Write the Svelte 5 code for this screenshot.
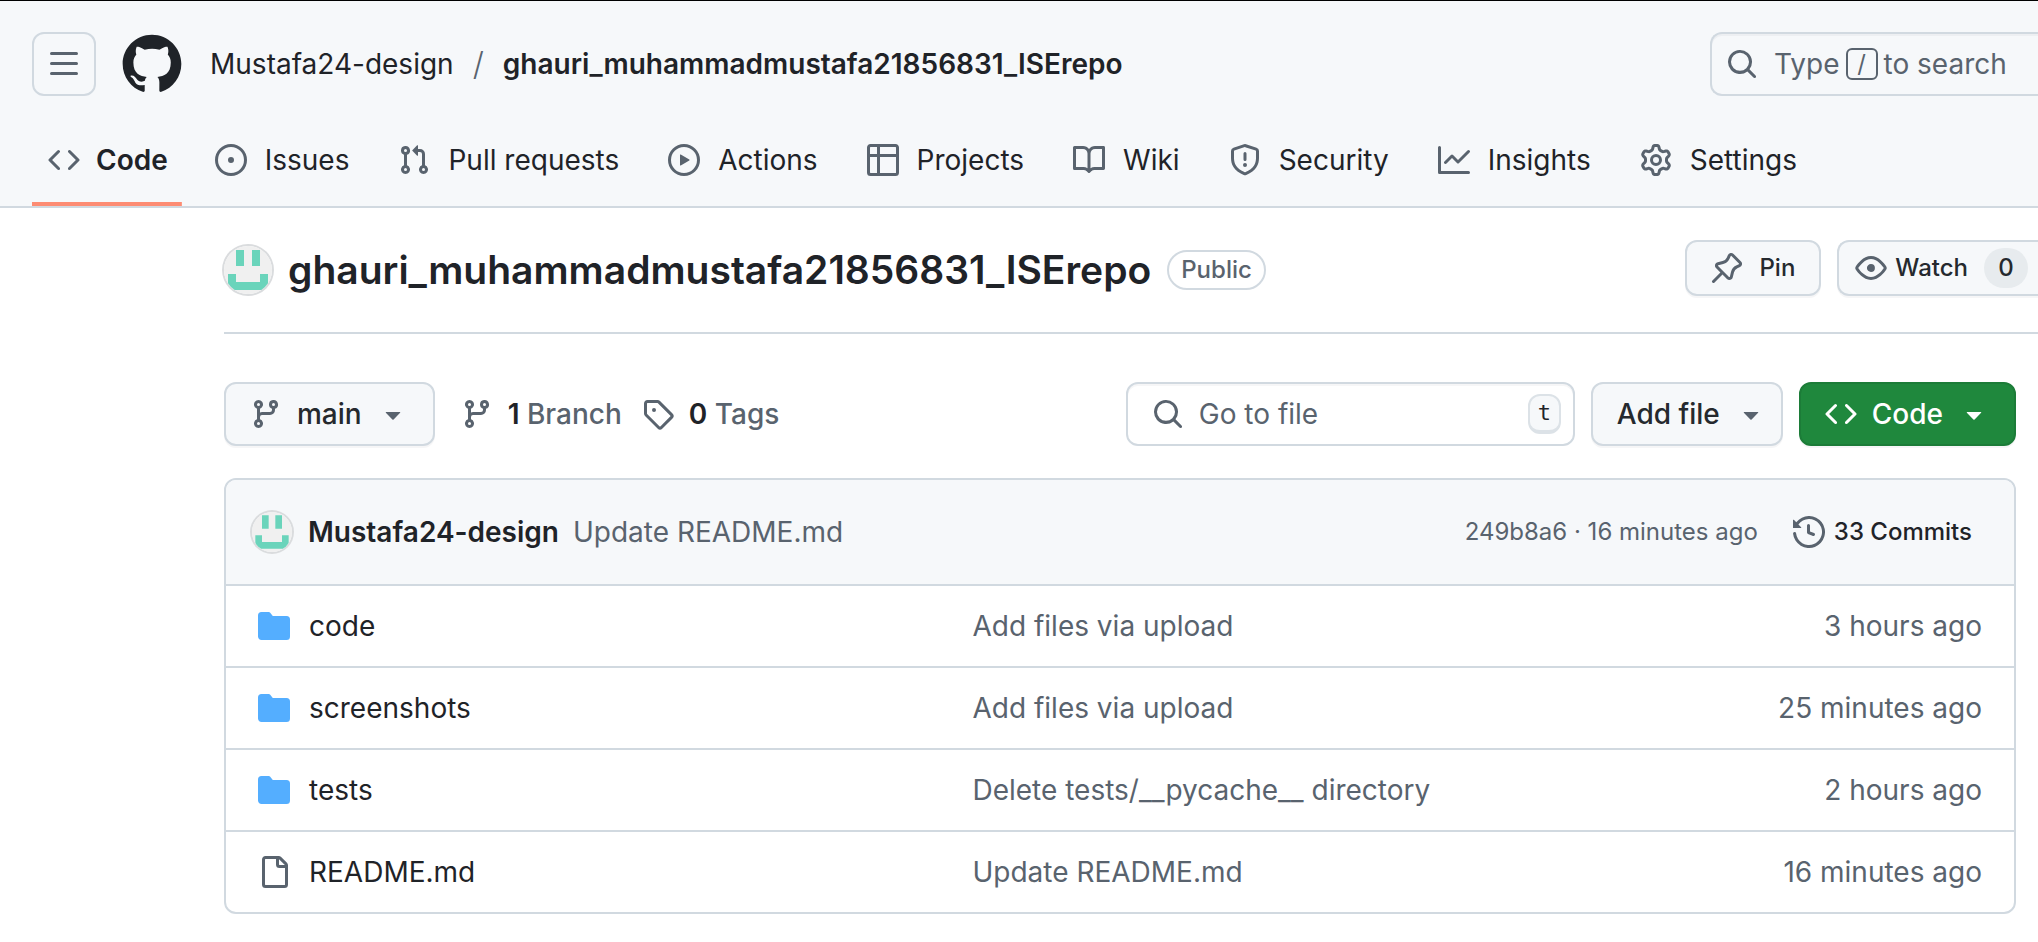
<script>
  const icons = {
    bars: 'M1 2.75A.75.75 0 0 1 1.75 2h12.5a.75.75 0 0 1 0 1.5H1.75A.75.75 0 0 1 1 2.75Zm0 5A.75.75 0 0 1 1.75 7h12.5a.75.75 0 0 1 0 1.5H1.75A.75.75 0 0 1 1 7.75ZM1.75 12h12.5a.75.75 0 0 1 0 1.5H1.75a.75.75 0 0 1 0-1.5Z',
    code: 'm11.28 3.22 4.25 4.25a.75.75 0 0 1 0 1.06l-4.25 4.25a.749.749 0 0 1-1.275-.326.749.749 0 0 1 .215-.734L13.94 8l-3.72-3.72a.749.749 0 0 1 .326-1.275.749.749 0 0 1 .734.215Zm-6.56 0a.751.751 0 0 1 1.042.018.751.751 0 0 1 .018 1.042L2.06 8l3.72 3.72a.749.749 0 0 1-.326 1.275.749.749 0 0 1-.734-.215L.47 8.53a.75.75 0 0 1 0-1.06Z',
    issue: 'M8 9.5a1.5 1.5 0 1 0 0-3 1.5 1.5 0 0 0 0 3ZM8 0a8 8 0 1 1 0 16A8 8 0 0 1 8 0ZM1.5 8a6.5 6.5 0 1 0 13 0 6.5 6.5 0 0 0-13 0Z',
    pull: 'M1.5 3.25a2.25 2.25 0 1 1 3 2.122v5.256a2.251 2.251 0 1 1-1.5 0V5.372A2.25 2.25 0 0 1 1.5 3.25Zm5.677-.177L9.573.677A.25.25 0 0 1 10 .854V2.5h1A2.5 2.5 0 0 1 13.5 5v5.628a2.251 2.251 0 1 1-1.5 0V5a1 1 0 0 0-1-1h-1v1.646a.25.25 0 0 1-.427.177L7.177 3.427a.25.25 0 0 1 0-.354ZM3.75 2.5a.75.75 0 1 0 0 1.5.75.75 0 0 0 0-1.5Zm0 9.5a.75.75 0 1 0 0 1.5.75.75 0 0 0 0-1.5Zm8.25.75a.75.75 0 1 0 1.5 0 .75.75 0 0 0-1.5 0Z',
    play: 'M8 0a8 8 0 1 1 0 16A8 8 0 0 1 8 0ZM1.5 8a6.5 6.5 0 1 0 13 0 6.5 6.5 0 0 0-13 0Zm4.879-2.773 4.264 2.559a.25.25 0 0 1 0 .428l-4.264 2.559A.25.25 0 0 1 6 10.559V5.442a.25.25 0 0 1 .379-.215Z',
    table: 'M0 1.75C0 .784.784 0 1.75 0h12.5C15.216 0 16 .784 16 1.75v12.5A1.75 1.75 0 0 1 14.25 16H1.75A1.75 1.75 0 0 1 0 14.25ZM6.5 6.5v8h7.75a.25.25 0 0 0 .25-.25V6.5Zm8-1.5V1.75a.25.25 0 0 0-.25-.25H6.5V5Zm-13 1.5v7.75c0 .138.112.25.25.25H5v-8ZM5 5V1.5H1.75a.25.25 0 0 0-.25.25V5Z',
    book: 'M0 1.75A.75.75 0 0 1 .75 1h4.253c1.227 0 2.317.59 3 1.501A3.743 3.743 0 0 1 11.006 1h4.245a.75.75 0 0 1 .75.75v10.5a.75.75 0 0 1-.75.75h-4.507a2.25 2.25 0 0 0-1.591.659l-.622.621a.75.75 0 0 1-1.06 0l-.622-.621A2.25 2.25 0 0 0 5.258 13H.75a.75.75 0 0 1-.75-.75Zm7.251 10.324.004-5.073-.002-2.253A2.25 2.25 0 0 0 5.003 2.5H1.5v9h3.757a3.75 3.75 0 0 1 1.994.574ZM8.755 4.75l-.004 7.322a3.752 3.752 0 0 1 1.992-.572H14.5v-9h-3.495a2.25 2.25 0 0 0-2.25 2.25Z',
    shield: 'M7.467.133a1.748 1.748 0 0 1 1.066 0l5.25 1.68A1.75 1.75 0 0 1 15 3.48V7c0 1.566-.32 3.182-1.303 4.682-.983 1.498-2.585 2.813-5.032 3.855a1.697 1.697 0 0 1-1.33 0c-2.447-1.042-4.049-2.357-5.032-3.855C1.32 10.182 1 8.566 1 7V3.48a1.75 1.75 0 0 1 1.217-1.667Zm.61 1.429a.25.25 0 0 0-.153 0l-5.25 1.68a.25.25 0 0 0-.174.238V7c0 1.358.275 2.666 1.057 3.86.784 1.194 2.121 2.34 4.366 3.297a.196.196 0 0 0 .154 0c2.245-.956 3.582-2.104 4.366-3.298C13.225 9.666 13.5 8.36 13.5 7V3.48a.251.251 0 0 0-.174-.237l-5.25-1.68ZM8.75 4.75v3a.75.75 0 0 1-1.5 0v-3a.75.75 0 0 1 1.5 0ZM9 10.5a1 1 0 1 1-2 0 1 1 0 0 1 2 0Z',
    graph: 'M1.5 1.75V13.5h13.75a.75.75 0 0 1 0 1.5H.75a.75.75 0 0 1-.75-.75V1.75a.75.75 0 0 1 1.5 0Zm14.28 2.53-5.25 5.25a.75.75 0 0 1-1.06 0L7 7.06 4.28 9.78a.751.751 0 0 1-1.042-.018.751.751 0 0 1-.018-1.042l3.25-3.25a.75.75 0 0 1 1.06 0L10 7.94l4.72-4.72a.751.751 0 0 1 1.042.018.751.751 0 0 1 .018 1.042Z',
    gear: 'M8 0a8.2 8.2 0 0 1 .701.031C9.444.095 9.99.645 10.16 1.29l.288 1.107c.018.066.079.158.212.224.231.114.454.243.668.386.123.082.233.09.299.071l1.103-.303c.644-.176 1.392.021 1.82.63.27.385.506.792.704 1.218.315.675.111 1.422-.364 1.891l-.814.806c-.049.048-.098.147-.088.294.016.257.016.515 0 .772-.01.147.038.246.088.294l.814.806c.475.469.679 1.216.364 1.891a7.977 7.977 0 0 1-.704 1.217c-.428.61-1.176.807-1.82.63l-1.102-.302c-.067-.019-.177-.011-.3.071a5.909 5.909 0 0 1-.668.386c-.133.066-.194.158-.211.224l-.29 1.106c-.168.646-.715 1.196-1.458 1.26a8.006 8.006 0 0 1-1.402 0c-.743-.064-1.289-.614-1.458-1.26l-.289-1.106c-.018-.066-.079-.158-.212-.224a5.738 5.738 0 0 1-.668-.386c-.123-.082-.233-.09-.299-.071l-1.103.303c-.644.176-1.392-.021-1.82-.63a8.12 8.12 0 0 1-.704-1.218c-.315-.675-.111-1.422.363-1.891l.815-.806c.05-.048.098-.147.088-.294a6.214 6.214 0 0 1 0-.772c.01-.147-.038-.246-.088-.294l-.815-.806C.635 6.045.431 5.298.746 4.623a7.92 7.92 0 0 1 .704-1.217c.428-.61 1.176-.807 1.82-.63l1.102.302c.067.019.177.011.3-.071.214-.143.437-.272.668-.386.133-.066.194-.158.211-.224l.29-1.106C6.009.645 6.556.095 7.299.03 7.53.01 7.764 0 8 0Zm-.571 1.525c-.036.003-.108.036-.137.146l-.289 1.105c-.147.561-.549.967-.998 1.189-.173.086-.34.183-.5.29-.417.278-.97.423-1.529.27l-1.103-.303c-.109-.03-.175.016-.195.045-.22.312-.412.644-.573.99-.014.031-.021.11.059.19l.815.806c.411.406.562.957.53 1.456a4.709 4.709 0 0 0 0 .582c.032.499-.119 1.05-.53 1.456l-.815.806c-.081.08-.073.159-.059.19.162.346.353.677.573.989.02.03.085.076.195.046l1.102-.303c.56-.153 1.113-.008 1.53.27.161.107.328.204.501.29.447.222.85.629.997 1.189l.289 1.105c.029.109.101.143.137.146a6.6 6.6 0 0 0 1.142 0c.036-.003.108-.036.137-.146l.289-1.105c.147-.561.549-.967.998-1.189.173-.086.34-.183.5-.29.417-.278.97-.423 1.529-.27l1.103.303c.109.029.175-.016.195-.045.22-.313.411-.644.573-.99.014-.031.021-.11-.059-.19l-.815-.806c-.411-.406-.562-.957-.53-1.456a4.709 4.709 0 0 0 0-.582c-.032-.499.119-1.05.53-1.456l.815-.806c.081-.08.073-.159.059-.19a6.464 6.464 0 0 0-.573-.989c-.02-.03-.085-.076-.195-.046l-1.102.303c-.56.153-1.113.008-1.53-.27a4.44 4.44 0 0 0-.501-.29c-.447-.222-.85-.629-.997-1.189l-.289-1.105c-.029-.11-.101-.143-.137-.146a6.6 6.6 0 0 0-1.142 0ZM11 8a3 3 0 1 1-6 0 3 3 0 0 1 6 0ZM9.5 8a1.5 1.5 0 1 0-3.001.001A1.5 1.5 0 0 0 9.5 8Z',
    search: 'M10.68 11.74a6 6 0 0 1-7.922-8.982 6 6 0 0 1 8.982 7.922l3.04 3.04a.749.749 0 0 1-.326 1.275.749.749 0 0 1-.734-.215ZM11.5 7a4.499 4.499 0 1 0-8.997 0A4.499 4.499 0 0 0 11.5 7Z',
    pin: 'm11.294.984 3.722 3.722a1.75 1.75 0 0 1-.504 2.826l-1.327.613a3.089 3.089 0 0 0-1.707 2.084l-.584 2.454c-.317 1.332-1.972 1.8-2.94.832L5.75 11.311 1.78 15.28a.749.749 0 1 1-1.06-1.06l3.969-3.97-2.204-2.204c-.968-.968-.5-2.623.832-2.94l2.454-.584a3.08 3.08 0 0 0 2.084-1.707l.613-1.327a1.75 1.75 0 0 1 2.826-.504ZM6.283 9.723l2.732 2.731a.25.25 0 0 0 .42-.119l.584-2.454a4.586 4.586 0 0 1 2.537-3.098l1.328-.613a.25.25 0 0 0 .072-.404l-3.722-3.722a.25.25 0 0 0-.404.072l-.613 1.328a4.584 4.584 0 0 1-3.098 2.537l-2.454.584a.25.25 0 0 0-.119.42l2.731 2.732Z',
    eye: 'M8 2c1.981 0 3.671.992 4.933 2.078 1.27 1.091 2.187 2.345 2.637 3.023a1.62 1.62 0 0 1 0 1.798c-.45.678-1.367 1.932-2.637 3.023C11.67 13.008 9.981 14 8 14c-1.981 0-3.671-.992-4.933-2.078C1.797 10.83.88 9.576.43 8.898a1.62 1.62 0 0 1 0-1.798c.45-.677 1.367-1.931 2.637-3.022C4.33 2.992 6.019 2 8 2ZM1.679 7.932a.12.12 0 0 0 0 .136c.411.622 1.241 1.75 2.366 2.717C5.176 11.758 6.527 12.5 8 12.5c1.473 0 2.825-.742 3.955-1.715 1.124-.967 1.954-2.096 2.366-2.717a.12.12 0 0 0 0-.136c-.412-.621-1.242-1.75-2.366-2.717C10.824 4.242 9.473 3.5 8 3.5c-1.473 0-2.825.742-3.955 1.715-1.124.967-1.954 2.096-2.366 2.717ZM8 10a2 2 0 1 1-.001-3.999A2 2 0 0 1 8 10Z',
    caret: 'm4.427 7.427 3.396 3.396a.25.25 0 0 0 .354 0l3.396-3.396A.25.25 0 0 0 11.396 7H4.604a.25.25 0 0 0-.177.427Z',
    branch: 'M9.5 3.25a2.25 2.25 0 1 1 3 2.122V6A2.5 2.5 0 0 1 10 8.5H6a1 1 0 0 0-1 1v1.128a2.251 2.251 0 1 1-1.5 0V5.372a2.25 2.25 0 1 1 1.5 0v1.836A2.493 2.493 0 0 1 6 7h4a1 1 0 0 0 1-1v-.628A2.25 2.25 0 0 1 9.5 3.25Zm-6 0a.75.75 0 1 0 1.5 0 .75.75 0 0 0-1.5 0Zm8.25-.75a.75.75 0 1 0 0 1.5.75.75 0 0 0 0-1.5ZM4.25 12a.75.75 0 1 0 0 1.5.75.75 0 0 0 0-1.5Z',
    tag: 'M1 7.775V2.75C1 1.784 1.784 1 2.75 1h5.025c.464 0 .91.184 1.238.513l6.25 6.25a1.75 1.75 0 0 1 0 2.474l-5.026 5.026a1.75 1.75 0 0 1-2.474 0l-6.25-6.25A1.752 1.752 0 0 1 1 7.775Zm1.5 0c0 .066.026.13.073.177l6.25 6.25a.25.25 0 0 0 .354 0l5.025-5.025a.25.25 0 0 0 0-.354l-6.25-6.25a.25.25 0 0 0-.177-.073H2.75a.25.25 0 0 0-.25.25ZM6 5a1 1 0 1 1 0 2 1 1 0 0 1 0-2Z',
    history: 'm.427 1.927 1.215 1.215a8.002 8.002 0 1 1-1.6 5.685.75.75 0 1 1 1.493-.154 6.5 6.5 0 1 0 1.18-4.458l1.358 1.358A.25.25 0 0 1 3.896 6H.25A.25.25 0 0 1 0 5.75V2.104a.25.25 0 0 1 .427-.177ZM7.75 4a.75.75 0 0 1 .75.75v2.992l2.028.812a.75.75 0 0 1-.557 1.392l-2.5-1A.751.751 0 0 1 7 8.25v-3.5A.75.75 0 0 1 7.75 4Z',
    folder: 'M1.75 1A1.75 1.75 0 0 0 0 2.75v10.5C0 14.216.784 15 1.75 15h12.5A1.75 1.75 0 0 0 16 13.25v-8.5A1.75 1.75 0 0 0 14.25 3H7.5a.25.25 0 0 1-.2-.1l-.9-1.2C6.07 1.26 5.55 1 5 1H1.75Z',
    file: 'M2 1.75C2 .784 2.784 0 3.75 0h6.586c.464 0 .909.184 1.237.513l2.914 2.914c.329.328.513.773.513 1.237v9.586A1.75 1.75 0 0 1 13.25 16h-9.5A1.75 1.75 0 0 1 2 14.25Zm1.75-.25a.25.25 0 0 0-.25.25v12.5c0 .138.112.25.25.25h9.5a.25.25 0 0 0 .25-.25V6h-2.75A1.75 1.75 0 0 1 9 4.25V1.5Zm6.75.062V4.25c0 .138.112.25.25.25h2.688l-.011-.013-2.914-2.914-.013-.011Z'
  };

  const owner = 'Mustafa24-design';
  const repo = 'ghauri_muhammadmustafa21856831_ISErepo';

  const tabs = [
    { label: 'Code', icon: 'code', current: true },
    { label: 'Issues', icon: 'issue' },
    { label: 'Pull requests', icon: 'pull' },
    { label: 'Actions', icon: 'play' },
    { label: 'Projects', icon: 'table' },
    { label: 'Wiki', icon: 'book' },
    { label: 'Security', icon: 'shield' },
    { label: 'Insights', icon: 'graph' },
    { label: 'Settings', icon: 'gear' }
  ];

  const files = [
    { name: 'code', icon: 'folder', message: 'Add files via upload', age: '3 hours ago' },
    { name: 'screenshots', icon: 'folder', message: 'Add files via upload', age: '25 minutes ago' },
    { name: 'tests', icon: 'folder', message: 'Delete tests/__pycache__ directory', age: '2 hours ago' },
    { name: 'README.md', icon: 'file', message: 'Update README.md', age: '16 minutes ago' }
  ];
</script>

{#snippet icon(name)}
  <svg class="icon {name}" viewBox="0 0 16 16" aria-hidden="true"><path d={icons[name]} /></svg>
{/snippet}

{#snippet avatar(size)}
  <svg class="avatar {size}" viewBox="0 0 48 48" aria-hidden="true">
    <rect width="48" height="48" fill="#f0f0f0" />
    <path fill="#6ad4bb" d="M12 4h8v16h-8zM28 4h8v16h-8zM4 28h8v8h24v-8h8v16H4z" />
  </svg>
{/snippet}

<header class="app-header">
  <div class="global-bar">
    <button class="menu" type="button" aria-label="Menu">{@render icon('bars')}</button>
    <a class="logo" href="#home" aria-label="GitHub">
      <svg viewBox="0 0 24 24" aria-hidden="true">
        <path d="M12 1C5.9225 1 1 5.9225 1 12C1 16.8675 4.14875 20.9787 8.52125 22.4362C9.07125 22.5325 9.2775 22.2025 9.2775 21.9137C9.2775 21.6525 9.26375 20.7862 9.26375 19.865C6.5 20.3737 5.785 19.1912 5.565 18.5725C5.44125 18.2562 4.905 17.28 4.4375 17.0187C4.0525 16.8125 3.5025 16.3037 4.42375 16.29C5.29 16.2762 5.90875 17.0875 6.115 17.4175C7.105 19.0812 8.68625 18.6137 9.31875 18.325C9.415 17.61 9.70375 17.1287 10.02 16.8537C7.5725 16.5787 5.015 15.63 5.015 11.4225C5.015 10.2262 5.44125 9.23625 6.1425 8.46625C6.0325 8.19125 5.6475 7.06375 6.2525 5.55125C6.2525 5.55125 7.17375 5.2625 9.2775 6.67875C10.1575 6.43125 11.0925 6.3075 12.0275 6.3075C12.9625 6.3075 13.8975 6.43125 14.7775 6.67875C16.8813 5.24875 17.8025 5.55125 17.8025 5.55125C18.4075 7.06375 18.0225 8.19125 17.9125 8.46625C18.6138 9.23625 19.04 10.2125 19.04 11.4225C19.04 15.6437 16.4688 16.5787 14.0213 16.8537C14.42 17.1975 14.7638 17.8575 14.7638 18.8887C14.7638 20.36 14.75 21.5425 14.75 21.9137C14.75 22.2025 14.9563 22.5462 15.5063 22.4362C19.8513 20.9787 23 16.8537 23 12C23 5.9225 18.0775 1 12 1Z" />
      </svg>
    </a>
    <nav class="crumbs" aria-label="Breadcrumb">
      <a href="#owner">{owner}</a>
      <span class="slash">/</span>
      <a class="strong" href="#repo">{repo}</a>
    </nav>
    <button class="site-search" type="button">
      {@render icon('search')}
      <span class="hint">Type <kbd>/</kbd> to search</span>
    </button>
  </div>

  <nav class="tabs" aria-label="Repository">
    {#each tabs as tab}
      <a class="tab" class:current={tab.current} href="#{tab.icon}" aria-current={tab.current ? 'page' : undefined}>
        {@render icon(tab.icon)}
        <span>{tab.label}</span>
      </a>
    {/each}
  </nav>
</header>

<main>
  <div class="title-bar">
    {@render avatar('large')}
    <h1>{repo}</h1>
    <span class="visibility">Public</span>
    <div class="actions">
      <button class="btn small pin-button" type="button">{@render icon('pin')}<span>Pin</span></button>
      <button class="btn small watch" type="button">
        {@render icon('eye')}<span>Watch</span><span class="count">0</span>
      </button>
    </div>
  </div>

  <div class="content">
    <div class="toolbar">
      <button class="btn branch-button" type="button">
        {@render icon('branch')}<span>main</span>{@render icon('caret')}
      </button>
      <div class="refs">
        <a href="#branches">{@render icon('branch')}<span><strong>1</strong> Branch</span></a>
        <a href="#tags">{@render icon('tag')}<span><strong>0</strong> Tags</span></a>
      </div>
      <label class="file-search">
        {@render icon('search')}
        <input type="text" placeholder="Go to file" aria-label="Go to file" />
        <kbd>t</kbd>
      </label>
      <button class="btn add" type="button"><span>Add file</span>{@render icon('caret')}</button>
      <button class="btn primary" type="button">
        {@render icon('code')}<span>Code</span>{@render icon('caret')}
      </button>
    </div>

    <section class="files">
      <div class="commit">
        {@render avatar('medium')}
        <a class="author" href="#author">{owner}</a>
        <a class="message" href="#commit">Update README.md</a>
        <span class="meta">249b8a6 · 16 minutes ago</span>
        <a class="history-link" href="#commits">{@render icon('history')}<span>33 Commits</span></a>
      </div>
      <table aria-label="Files">
        <tbody>
          {#each files as file}
            <tr>
              <td class="name"><a href="#{file.name}">{@render icon(file.icon)}<span>{file.name}</span></a></td>
              <td><a class="muted" href="#commit">{file.message}</a></td>
              <td class="age">{file.age}</td>
            </tr>
          {/each}
        </tbody>
      </table>
    </section>
  </div>
</main>

<style>
  :global(body) {
    background: #fff;
    color: #1f2328;
    font-family: Inter, "Liberation Sans", sans-serif;
    font-size: 28px;
    line-height: 40px;
    overflow-x: hidden;
  }

  a {
    color: inherit;
    text-decoration: none;
  }

  button,
  input {
    font: inherit;
    color: inherit;
  }

  button {
    margin: 0;
    cursor: pointer;
  }

  span,
  a {
    white-space: nowrap;
  }

  .icon {
    display: block;
    flex: none;
    width: 32px;
    height: 32px;
    fill: #59636e;
  }

  .avatar {
    display: block;
    flex: none;
    border-radius: 50%;
    box-shadow: 0 0 0 2px #dadcde;
  }

  .avatar.large {
    width: 48px;
    height: 48px;
  }

  .avatar.medium {
    width: 40px;
    height: 40px;
  }

  .app-header {
    background: #f6f8fa;
    border-top: 1px solid #000;
    border-bottom: 2px solid #d1d9e0;
    padding-top: 31px;
  }

  .global-bar {
    display: flex;
    align-items: center;
    padding-left: 32px;
  }

  .menu {
    display: grid;
    place-items: center;
    box-sizing: border-box;
    width: 64px;
    height: 64px;
    padding: 0;
    background: transparent;
    border: 2px solid #d1d9e0;
    border-radius: 12px;
  }

  .logo {
    margin-left: 24px;
  }

  .logo svg {
    display: block;
    width: 64px;
    height: 64px;
    fill: #1f2328;
  }

  .crumbs {
    display: flex;
    align-items: center;
    gap: 19px;
    margin-left: 26px;
  }

  .slash {
    color: #59636e;
    font-size: 32px;
    font-weight: 300;
  }

  .strong {
    font-weight: 600;
  }

  .site-search {
    display: flex;
    align-items: center;
    gap: 16px;
    box-sizing: border-box;
    width: 328px;
    height: 64px;
    margin-left: auto;
    padding: 0 0 0 14px;
    color: #59636e;
    background: transparent;
    border: 2px solid #d1d9e0;
    border-right: 0;
    border-radius: 12px 0 0 12px;
    box-shadow: inset 0 2px 0 rgba(31, 35, 40, 0.04);
  }

  .hint {
    display: flex;
    align-items: center;
    gap: 6px;
  }

  .hint kbd {
    box-sizing: border-box;
    width: 32px;
    height: 32px;
    border: 2px solid #59636e;
    border-radius: 6px;
    font: 24px/28px Inter, sans-serif;
    text-align: center;
  }

  .tabs {
    display: flex;
    gap: 17px;
    padding: 18px 32px 0;
  }

  .tab {
    display: flex;
    align-items: center;
    gap: 18px;
    box-sizing: border-box;
    height: 92px;
    padding: 0 16px;
  }

  .tab.current {
    gap: 16px;
    padding-right: 14px;
    font-weight: 600;
    background: linear-gradient(#fd8c73, #fd8c73) bottom / 100% 4px no-repeat;
  }

  .title-bar {
    display: flex;
    align-items: center;
    gap: 16px;
    margin-left: 224px;
    padding: 32px 0;
    border-bottom: 2px solid #d1d9e0;
  }

  h1 {
    margin: 0;
    font-size: 39px;
    font-weight: 600;
    line-height: 60px;
  }

  .visibility {
    box-sizing: border-box;
    height: 40px;
    padding: 0 12px;
    color: #59636e;
    border: 2px solid #d1d9e0;
    border-radius: 20px;
    font-size: 24px;
    font-weight: 500;
    line-height: 36px;
  }

  .actions {
    display: flex;
    align-self: flex-start;
    gap: 16px;
    margin-left: auto;
  }

  .btn {
    display: flex;
    align-items: center;
    box-sizing: border-box;
    height: 64px;
    padding: 0 24px;
    color: #25292e;
    background: #f6f8fa;
    border: 2px solid #d1d9e0;
    border-radius: 12px;
    box-shadow: 0 2px 0 rgba(31, 35, 40, 0.04);
    font-weight: 500;
    gap: 15px;
  }

  .btn.small {
    height: 56px;
    font-size: 24px;
  }

  .pin-button {
    gap: 16px;
  }

  .watch {
    gap: 8px;
    padding: 0 10px 0 16px;
    border-right: 0;
    border-radius: 12px 0 0 12px;
  }

  .count {
    min-width: 44px;
    height: 40px;
    margin-left: 8px;
    border-radius: 22px;
    background: #e7ebee;
    font-size: 24px;
    text-align: center;
  }

  .content {
    padding: 48px 22px 28px 224px;
  }

  .toolbar {
    display: flex;
    align-items: center;
    gap: 16px;
  }

  .refs {
    display: flex;
    gap: 20px;
    margin: 0 auto 0 10px;
    color: #59636e;
    font-weight: 500;
  }

  .refs a {
    display: flex;
    align-items: center;
    gap: 15px;
  }

  .refs strong {
    color: #1f2328;
    font-weight: 600;
  }

  .file-search {
    display: flex;
    align-items: center;
    gap: 15px;
    box-sizing: border-box;
    width: 449px;
    height: 64px;
    padding: 0 12px 0 24px;
    border: 2px solid #d1d9e0;
    border-radius: 12px;
    box-shadow: inset 0 2px 0 rgba(31, 35, 40, 0.04);
  }

  .file-search input {
    flex: 1;
    min-width: 0;
    padding: 0;
    background: transparent;
    border: 0;
    outline: 0;
  }

  .file-search input::placeholder {
    color: #59636e;
    opacity: 1;
  }

  .file-search kbd {
    box-sizing: border-box;
    width: 33px;
    height: 40px;
    background: #f6f8fa;
    border: 2px solid #dce2e7;
    border-bottom-width: 4px;
    border-radius: 12px;
    font: 22px/34px "DejaVu Sans Mono", monospace;
    text-align: center;
  }

  .add {
    padding-right: 14px;
  }

  .primary {
    color: #fff;
    background: #1f883d;
    border-color: #1c7c38;
  }

  .primary .icon {
    fill: #fff;
  }

  .files {
    margin-top: 32px;
    border: 2px solid #d1d9e0;
    border-radius: 12px;
    overflow: hidden;
  }

  .commit {
    display: flex;
    align-items: center;
    box-sizing: border-box;
    height: 104px;
    padding: 0 42px 0 26px;
    background: #f6f8fa;
  }

  .author {
    margin-left: 16px;
    font-weight: 600;
  }

  .message {
    margin-left: 14px;
    color: #59636e;
  }

  .meta {
    margin-left: auto;
    color: #59636e;
    font-size: 24px;
  }

  .history-link {
    display: flex;
    align-items: center;
    gap: 9px;
    margin-left: 35px;
    font-size: 24px;
    font-weight: 500;
  }

  table {
    width: 100%;
    border-collapse: separate;
    border-spacing: 0;
    table-layout: fixed;
  }

  td {
    height: 80px;
    padding: 0;
    border-top: 2px solid #d1d9e0;
  }

  td.name {
    width: 41.75%;
  }

  td.name a {
    display: flex;
    align-items: center;
    gap: 19px;
    padding-left: 32px;
  }

  .folder {
    fill: #54aeff;
  }

  .muted,
  .age {
    color: #59636e;
  }

  td.age {
    width: 20%;
    padding-right: 32px;
    text-align: right;
  }
</style>
